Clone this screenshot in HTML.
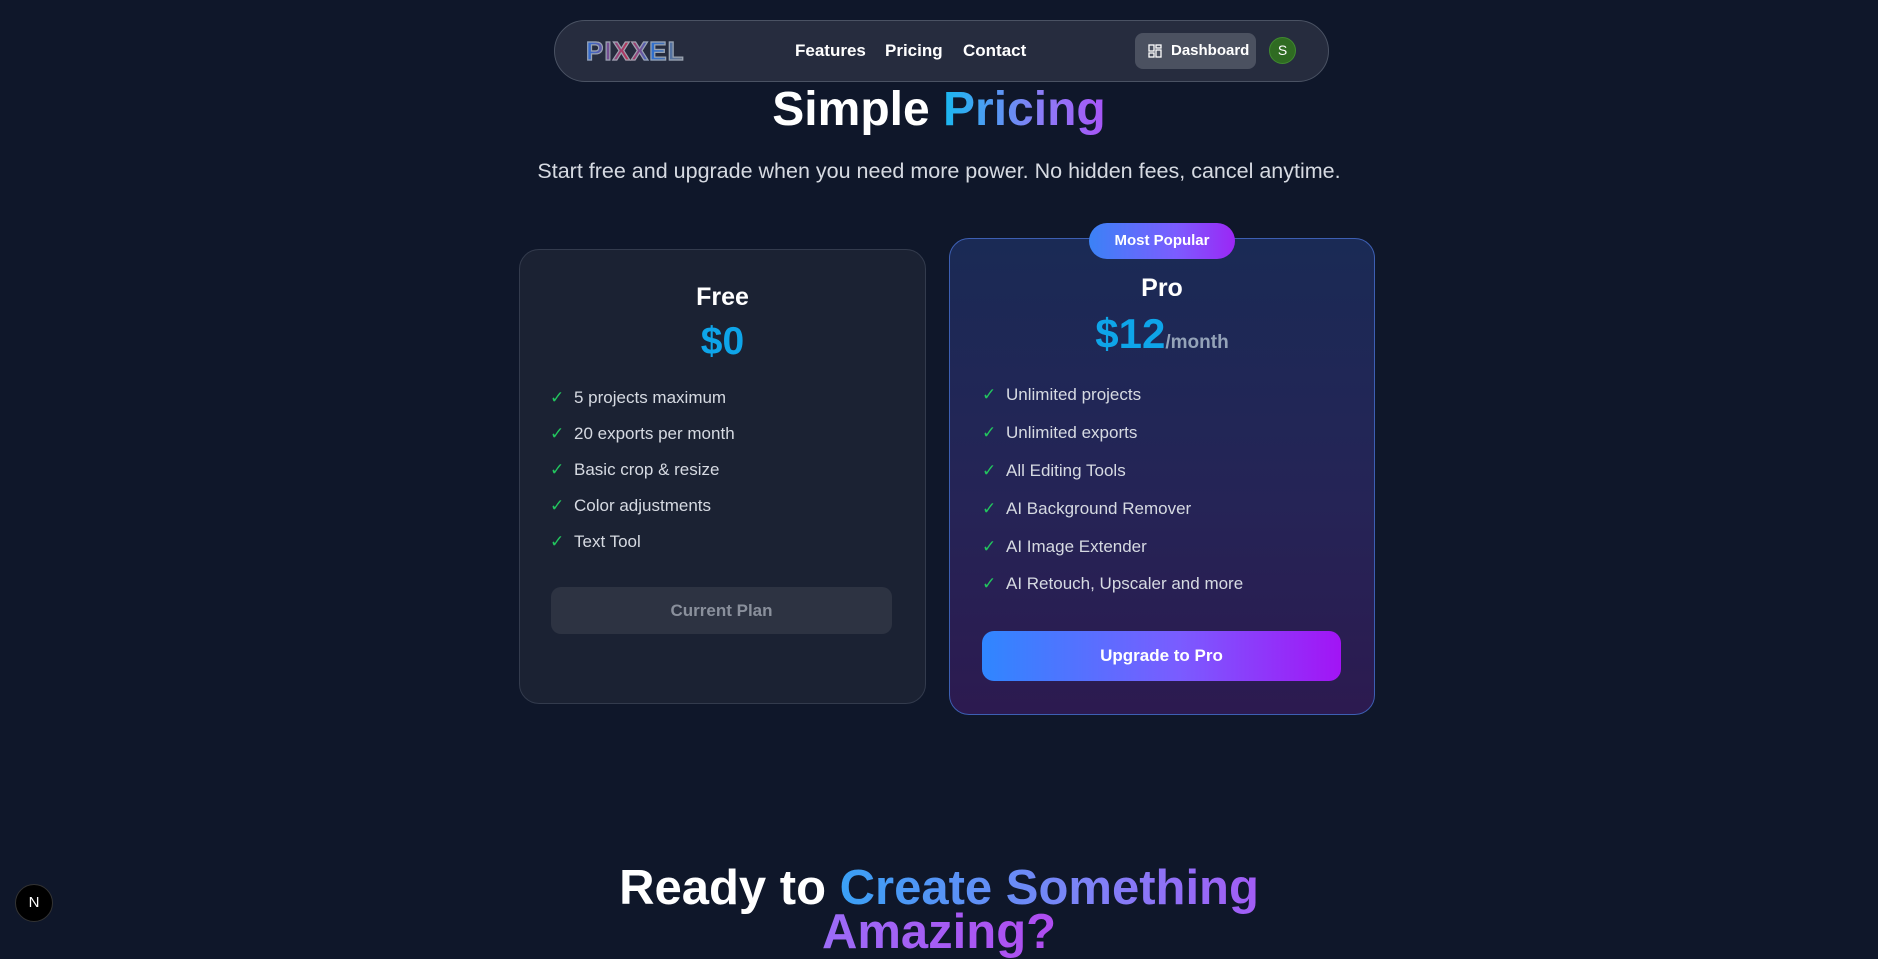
<!DOCTYPE html>
<html><head><meta charset="utf-8"><style>
*{margin:0;padding:0;box-sizing:border-box}
body{width:1878px;height:941px;overflow:hidden;background:#0f172a;font-family:"Liberation Sans",sans-serif;color:#fff;position:relative}
.abs{position:absolute}
.nav{left:554px;top:20px;width:775px;height:62px;border-radius:31px;background:#262c3e;border:1px solid #4a5263}
.card{border-radius:20px}
.feat{position:absolute;font-size:17px;color:#d6dae2;white-space:nowrap}
.feat b{color:#22c55e;font-weight:normal;display:inline-block;width:24px}
</style></head><body>
<div class="abs nav"></div>
<div class="abs" style="left:586px;top:36px;font-size:26px;font-weight:bold;letter-spacing:1px;-webkit-text-stroke:1.2px #9aa3b0;background:linear-gradient(90deg,#2a6fd6,#c0304f 45%,#2a6fd6 65%,#6c7380);-webkit-background-clip:text;background-clip:text;color:transparent">PIXXEL</div>
<div class="abs" style="left:795px;top:41px;font-size:17px;font-weight:bold">Features</div>
<div class="abs" style="left:885px;top:41px;font-size:17px;font-weight:bold">Pricing</div>
<div class="abs" style="left:963px;top:41px;font-size:17px;font-weight:bold">Contact</div>
<div class="abs" style="left:1135px;top:33px;width:121px;height:36px;border-radius:8px;background:#4b5160"></div>
<svg class="abs" style="left:1148px;top:44px" width="14" height="14" viewBox="0 0 14 14" fill="none" stroke="#fff" stroke-width="1.3"><rect x="1" y="1" width="5" height="6"/><rect x="8" y="1" width="5" height="3"/><rect x="1" y="9" width="5" height="4"/><rect x="8" y="6" width="5" height="7"/></svg>
<div class="abs" style="left:1171px;top:42px;font-size:15px;font-weight:bold">Dashboard</div>
<div class="abs" style="left:1269px;top:37px;width:27px;height:27px;border-radius:50%;background:#2f6b22;border:1px solid #3f8a2f;font-size:14px;text-align:center;line-height:25px">S</div>

<div class="abs" style="left:0;width:1878px;top:82px;text-align:center;font-size:48px;font-weight:bold">Simple <span style="background:linear-gradient(90deg,#19b8f0,#8b7cf6 60%,#a855f7);-webkit-background-clip:text;background-clip:text;color:transparent">Pricing</span></div>
<div class="abs" style="left:0;width:1878px;top:159px;text-align:center;font-size:21.5px;color:#d6dae2">Start free and upgrade when you need more power. No hidden fees, cancel anytime.</div>

<div class="abs card" style="left:519px;top:249px;width:407px;height:455px;background:#1b2233;border:1px solid #333b4d"></div>
<div class="abs" style="left:519px;width:407px;top:283px;text-align:center;font-size:25px;font-weight:bold">Free</div>
<div class="abs" style="left:519px;width:407px;top:320px;text-align:center;font-size:39px;font-weight:bold;color:#0ea5e9">$0</div>
<div class="feat" style="left:550px;top:388px"><b>✓</b>5 projects maximum</div>
<div class="feat" style="left:550px;top:424px"><b>✓</b>20 exports per month</div>
<div class="feat" style="left:550px;top:460px"><b>✓</b>Basic crop &amp; resize</div>
<div class="feat" style="left:550px;top:496px"><b>✓</b>Color adjustments</div>
<div class="feat" style="left:550px;top:532px"><b>✓</b>Text Tool</div>
<div class="abs" style="left:551px;top:587px;width:341px;height:47px;border-radius:10px;background:#2d3342;color:#8a909c;font-size:17px;font-weight:bold;text-align:center;line-height:47px">Current Plan</div>

<div class="abs card" style="left:949px;top:238px;width:426px;height:477px;background:linear-gradient(180deg,#1a2a55,#252456 55%,#2c1a50);border:1px solid #3d5fb3"></div>
<div class="abs" style="left:1089px;top:223px;width:146px;height:36px;border-radius:18px;background:linear-gradient(90deg,#3b82f6,#7c5cff 60%,#9b27f5);font-size:15px;font-weight:bold;text-align:center;line-height:36px">Most Popular</div>
<div class="abs" style="left:949px;width:426px;top:274px;text-align:center;font-size:25px;font-weight:bold">Pro</div>
<div class="abs" style="left:949px;width:426px;top:310px;text-align:center;font-weight:bold"><span style="font-size:42px;color:#0ea5e9">$12</span><span style="font-size:19px;color:#94a3b8">/month</span></div>
<div class="feat" style="left:982px;top:385px"><b>✓</b>Unlimited projects</div>
<div class="feat" style="left:982px;top:423px"><b>✓</b>Unlimited exports</div>
<div class="feat" style="left:982px;top:461px"><b>✓</b>All Editing Tools</div>
<div class="feat" style="left:982px;top:499px"><b>✓</b>AI Background Remover</div>
<div class="feat" style="left:982px;top:537px"><b>✓</b>AI Image Extender</div>
<div class="feat" style="left:982px;top:574px"><b>✓</b>AI Retouch, Upscaler and more</div>
<div class="abs" style="left:982px;top:631px;width:359px;height:50px;border-radius:12px;background:linear-gradient(90deg,#2f86ff,#7a5cff 55%,#a214f5);font-size:17px;font-weight:bold;text-align:center;line-height:50px">Upgrade to Pro</div>

<div class="abs" style="left:0;width:1878px;top:866px;text-align:center;font-size:49px;font-weight:bold;line-height:44px">Ready to <span style="background:linear-gradient(90deg,#3aa0f5,#7f82f7 60%,#a35cf5);-webkit-background-clip:text;background-clip:text;color:transparent">Create Something</span><br><span style="background:linear-gradient(90deg,#9b6cf7,#b04cf0);-webkit-background-clip:text;background-clip:text;color:transparent">Amazing?</span></div>

<div class="abs" style="left:15px;top:884px;width:38px;height:38px;border-radius:50%;background:#000;border:1px solid #333;font-size:15px;text-align:center;line-height:36px">N</div>
</body></html>
